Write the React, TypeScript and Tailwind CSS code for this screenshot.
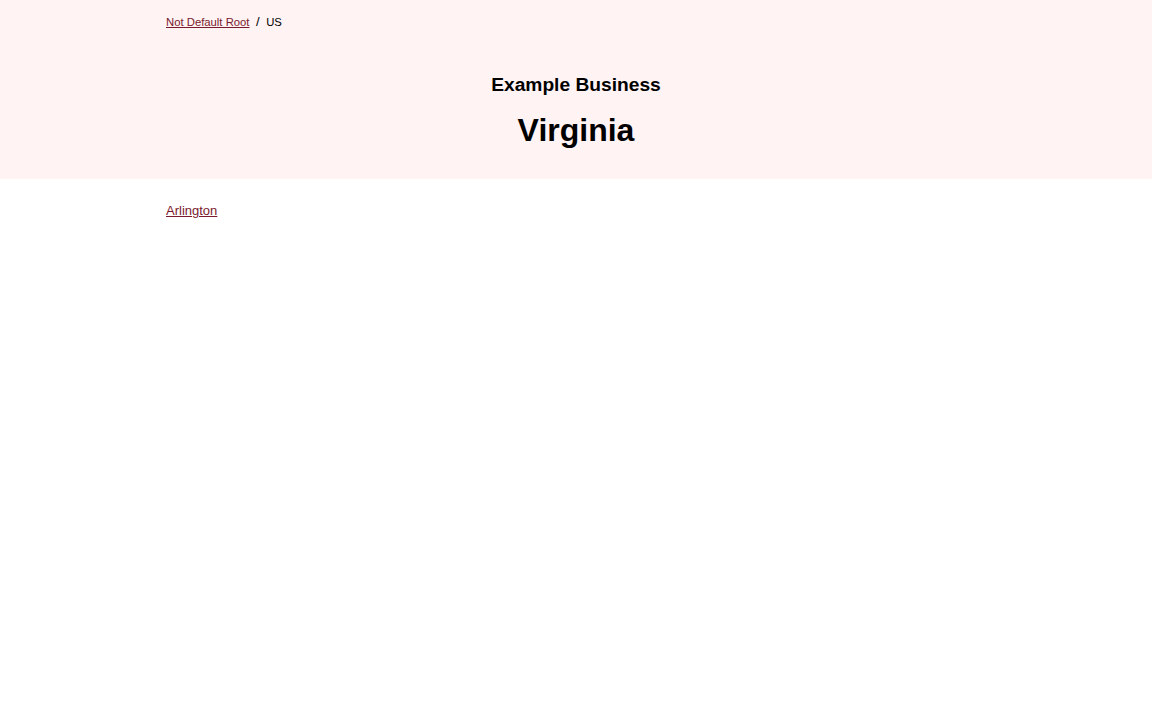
export default function App() {
  return (
    <div className="min-h-screen bg-white text-black font-['Liberation_Sans',Arial,sans-serif]">
      {/* Header band */}
      <header className="bg-[#fff3f4] h-[179px]">
        <div className="max-w-[820px] mx-auto">
          <nav className="pt-[15px] flex items-center gap-[6.5px] text-[11.3px] leading-[14px]">
            <a href="#" className="text-[#7a1a2e] underline">Not Default Root</a>
            <span className="text-[13px]">/</span>
            <span>US</span>
          </nav>
          <div className="text-center mt-[45px]">
            <h2 className="text-[19.2px] font-bold leading-[22px]">Example Business</h2>
            <h1 className="text-[32px] font-bold leading-[36px] mt-[16px]">Virginia</h1>
          </div>
        </div>
      </header>

      <main className="max-w-[820px] mx-auto pt-[24px] text-[13px] leading-[16px]">
        <a href="#" className="text-[#7a1a2e] underline">Arlington</a>
      </main>
    </div>
  )
}
